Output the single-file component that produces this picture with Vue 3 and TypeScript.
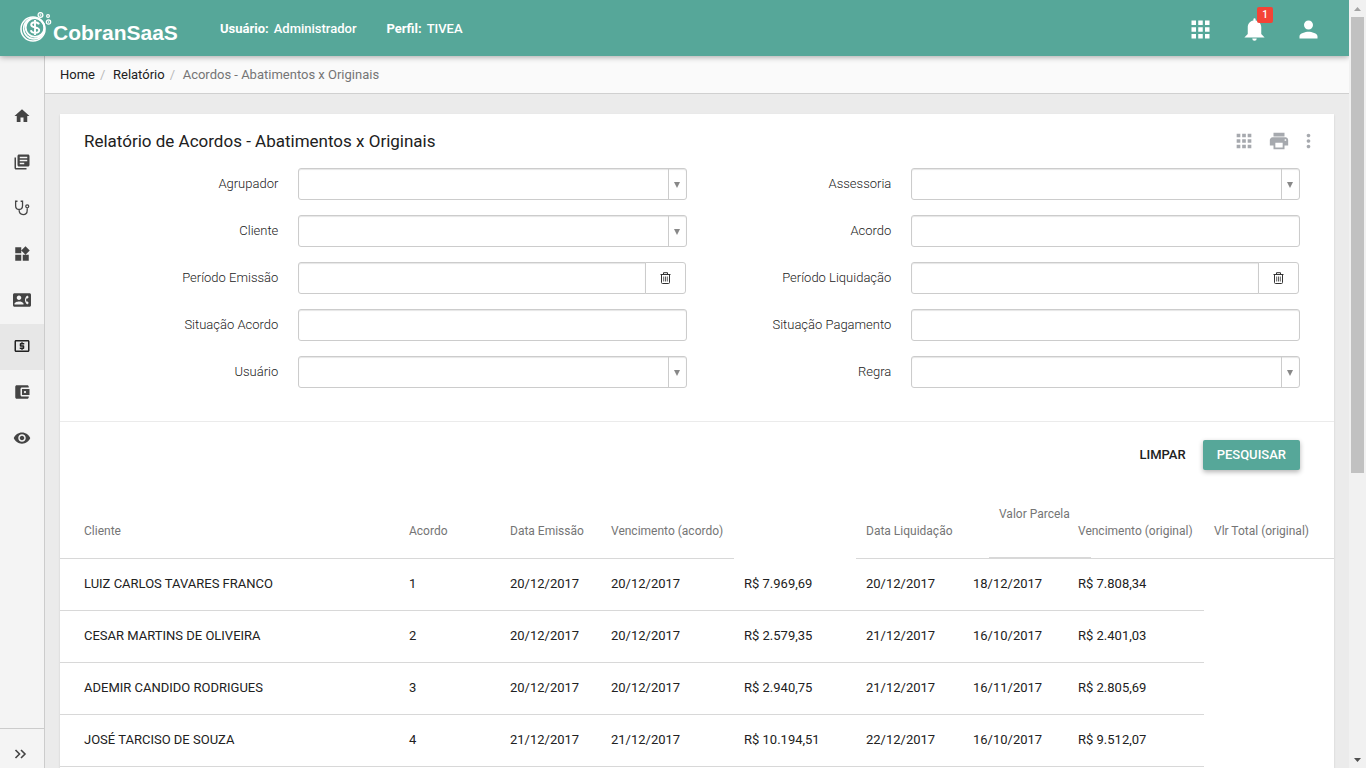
<script setup lang="ts">
interface NavItem {
  label: string
  path: string
  outline?: boolean
  active?: boolean
}

interface Field {
  id: string
  label: string
  kind: 'select' | 'text' | 'period'
}

interface Row {
  cliente: string
  acordo: number
  emissao: string
  vencimento: string
  valor: string
  liquidacao: string
  vencOriginal: string
  total: string
}

const icons = {
  apps: 'M4 8h4V4H4v4zm6 12h4v-4h-4v4zm-6 0h4v-4H4v4zm0-6h4v-4H4v4zm6 0h4v-4h-4v4zm6-10v4h4V4h-4zm-6 4h4V4h-4v4zm6 6h4v-4h-4v4zm0 6h4v-4h-4v4z',
  bell: 'M14 20a2 2 0 0 1-4 0h4zM12 2a1 1 0 0 1 1 1v1.08c2.84.48 5 2.95 5 5.92v6l3 3H3l3-3v-6c0-2.97 2.16-5.44 5-5.92V3a1 1 0 0 1 1-1z',
  person: 'M12 12c2.21 0 4-1.79 4-4s-1.79-4-4-4-4 1.79-4 4 1.79 4 4 4zm0 2c-2.67 0-8 1.34-8 4v2h16v-2c0-2.66-5.33-4-8-4z',
  print: 'M19 8H5c-1.66 0-3 1.34-3 3v6h4v4h12v-4h4v-6c0-1.66-1.34-3-3-3zm-3 11H8v-5h8v5zm3-7c-.55 0-1-.45-1-1s.45-1 1-1 1 .45 1 1-.45 1-1 1zm-1-9H6v4h12V3z',
  more: 'M12 8c1.1 0 2-.9 2-2s-.9-2-2-2-2 .9-2 2 .9 2 2 2zm0 2c-1.1 0-2 .9-2 2s.9 2 2 2 2-.9 2-2-.9-2-2-2zm0 6c-1.1 0-2 .9-2 2s.9 2 2 2 2-.9 2-2-.9-2-2-2z',
}

const nav: NavItem[] = [
  { label: 'Início', path: 'M10 20v-6h4v6h5v-8h3L12 3 2 12h3v8z' },
  { label: 'Cadastros', path: 'M4 6H2v14c0 1.1.9 2 2 2h14v-2H4V6zm16-4H8c-1.1 0-2 .9-2 2v12c0 1.1.9 2 2 2h12c1.1 0 2-.9 2-2V4c0-1.1-.9-2-2-2zm-1 9H9V9h10v2zm-4 4H9v-2h6v2zm4-8H9V5h10v2z' },
  { label: 'Diagnóstico', outline: true, path: 'M6 3H3.500v6c0 3 1.900 5 4.600 5s4.600-2 4.600-5V3H10.200M8.100 14c0 4.200 2 6.700 5.400 6.700 3.500 0 5.400-2.500 5.400-5.500v-3.500M21 9.700a2 2 0 1 1-4 0 2 2 0 0 1 4 0' },
  { label: 'Painéis', path: 'M13 13v8h8v-8h-8zM3 21h8v-8H3v8zM3 3v8h8V3H3zm13.66-1.31L11 7.34 16.66 13l5.66-5.66-5.66-5.65z' },
  { label: 'Contatos', path: 'M22 3H2C.9 3 0 3.9 0 5v14c0 1.1.9 2 2 2h20c1.1 0 1.99-.9 1.99-2L24 5c0-1.1-.9-2-2-2zM8 6c1.66 0 3 1.34 3 3s-1.34 3-3 3-3-1.34-3-3 1.34-3 3-3zm6 12H2v-1c0-2 4-3.1 6-3.1s6 1.1 6 3.1v1zm3.85-4h1.64L21 16l-1.99 1.99c-1.31-.98-2.28-2.38-2.73-3.99-.18-.64-.28-1.31-.28-2s.1-1.36.28-2c.45-1.62 1.42-3.01 2.73-3.99L21 8l-1.51 2h-1.64c-.22.63-.35 1.3-.35 2s.13 1.37.35 2z' },
  { label: 'Relatórios', active: true, path: 'M11 17h2v-1h1c.55 0 1-.45 1-1v-3c0-.55-.45-1-1-1h-3v-1h4V8h-2V7h-2v1h-1c-.55 0-1 .45-1 1v3c0 .55.45 1 1 1h3v1H9v2h2v1zm9-13H4c-1.11 0-1.99.89-1.99 2L2 18c0 1.11.89 2 2 2h16c1.11 0 2-.89 2-2V6c0-1.11-.89-2-2-2zm0 14H4V6h16v12z' },
  { label: 'Carteira', path: 'M21 18v1c0 1.1-.9 2-2 2H5c-1.11 0-2-.9-2-2V5c0-1.1.89-2 2-2h14c1.1 0 2 .9 2 2v1h-9c-1.11 0-2 .9-2 2v8c0 1.1.89 2 2 2h9zm-9-2h10V8H12v8zm4-2.5c-.83 0-1.5-.67-1.5-1.5s.67-1.5 1.5-1.5 1.5.67 1.5 1.5-.67 1.5-1.5 1.5z' },
  { label: 'Monitoramento', path: 'M12 4.5C7 4.5 2.73 7.61 1 12c1.73 4.39 6 7.5 11 7.5s9.27-3.11 11-7.5c-1.73-4.39-6-7.5-11-7.5zM12 17c-2.76 0-5-2.24-5-5s2.24-5 5-5 5 2.24 5 5-2.24 5-5 5zm0-8c-1.66 0-3 1.34-3 3s1.34 3 3 3 3-1.34 3-3-1.34-3-3-3z' },
]

const fields: Field[] = [
  { id: 'agrupador', label: 'Agrupador', kind: 'select' },
  { id: 'assessoria', label: 'Assessoria', kind: 'select' },
  { id: 'cliente', label: 'Cliente', kind: 'select' },
  { id: 'acordo', label: 'Acordo', kind: 'text' },
  { id: 'emissao', label: 'Período Emissão', kind: 'period' },
  { id: 'liquidacao', label: 'Período Liquidação', kind: 'period' },
  { id: 'situacao-acordo', label: 'Situação Acordo', kind: 'text' },
  { id: 'situacao-pagamento', label: 'Situação Pagamento', kind: 'text' },
  { id: 'usuario', label: 'Usuário', kind: 'select' },
  { id: 'regra', label: 'Regra', kind: 'select' },
]

const rows: Row[] = [
  { cliente: 'LUIZ CARLOS TAVARES FRANCO', acordo: 1, emissao: '20/12/2017', vencimento: '20/12/2017', valor: 'R$ 7.969,69', liquidacao: '20/12/2017', vencOriginal: '18/12/2017', total: 'R$ 7.808,34' },
  { cliente: 'CESAR MARTINS DE OLIVEIRA', acordo: 2, emissao: '20/12/2017', vencimento: '20/12/2017', valor: 'R$ 2.579,35', liquidacao: '21/12/2017', vencOriginal: '16/10/2017', total: 'R$ 2.401,03' },
  { cliente: 'ADEMIR CANDIDO RODRIGUES', acordo: 3, emissao: '20/12/2017', vencimento: '20/12/2017', valor: 'R$ 2.940,75', liquidacao: '21/12/2017', vencOriginal: '16/11/2017', total: 'R$ 2.805,69' },
  { cliente: 'JOSÉ TARCISO DE SOUZA', acordo: 4, emissao: '21/12/2017', vencimento: '21/12/2017', valor: 'R$ 10.194,51', liquidacao: '22/12/2017', vencOriginal: '16/10/2017', total: 'R$ 9.512,07' },
]
</script>

<template>
  <div class="screen">
    <div class="app">
      <header class="topbar">
        <a class="brand" href="#" aria-label="CobranSaaS">
          <svg class="coins" viewBox="0 0 32 32" fill="none" stroke="#fff" aria-hidden="true">
            <circle cx="13" cy="17" r="12" stroke-width="1.6" />
            <circle cx="14" cy="16.500" r="10.400" stroke-width="1.500" />
            <circle cx="15" cy="15.500" r="9.400" stroke-width="1.900" />
            <path d="M19 12.300c-.6-1.500-2-2.100-4-2.100-2.200 0-3.800.9-3.800 2.600 0 3.600 8 1.600 8 5.300 0 1.800-1.700 2.800-4 2.800-2.300 0-3.900-.8-4.400-2.600M15 8v15" stroke-width="1.900" />
            <circle cx="20.500" cy="3" r="2.400" stroke-width="1.300" />
            <circle cx="20.500" cy="3" r=".7" stroke-width=".8" />
            <circle cx="28" cy="4" r="1.400" stroke-width="1.200" />
            <circle cx="28.500" cy="10" r="2.200" stroke-width="1.200" />
            <circle cx="28.500" cy="10" r=".6" stroke-width=".8" />
          </svg>
          <span class="brand-name">CobranSaaS</span>
        </a>
        <div class="session">
          <span><b>Usuário:</b>Administrador</span>
          <span><b>Perfil:</b>TIVEA</span>
        </div>
        <div class="top-actions">
          <button type="button" aria-label="Aplicativos">
            <svg viewBox="0 0 24 24"><path :d="icons.apps" /></svg>
          </button>
          <button type="button" aria-label="Notificações">
            <svg viewBox="0 0 24 24"><path :d="icons.bell" /></svg>
            <span class="badge">1</span>
          </button>
          <button type="button" aria-label="Conta">
            <svg viewBox="0 0 24 24"><path :d="icons.person" /></svg>
          </button>
        </div>
      </header>

      <div class="body">
        <nav class="sidebar" aria-label="Menu">
          <a v-for="item in nav" :key="item.label" href="#" :aria-label="item.label" :class="{ active: item.active }">
            <svg viewBox="0 0 24 24" :class="{ outline: item.outline }"><path :d="item.path" /></svg>
          </a>
          <button class="expand" type="button" aria-label="Expandir menu">
            <svg viewBox="0 0 12 10" fill="none" stroke="#444" stroke-width="1.600"><path d="M1 1l4 4-4 4M6.500 1l4 4-4 4" /></svg>
          </button>
        </nav>

        <div class="content">
          <nav class="breadcrumb" aria-label="Trilha">
            <a href="#">Home</a><i>/</i><a href="#">Relatório</a><i>/</i><span>Acordos - Abatimentos x Originais</span>
          </nav>

          <main>
            <section class="card">
              <div class="card-head">
                <h1>Relatório de Acordos - Abatimentos x Originais</h1>
                <div class="card-actions">
                  <button type="button" aria-label="Colunas"><svg viewBox="0 0 24 24"><path :d="icons.apps" /></svg></button>
                  <button type="button" aria-label="Imprimir"><svg viewBox="0 0 24 24"><path :d="icons.print" /></svg></button>
                  <button class="more" type="button" aria-label="Mais opções"><svg viewBox="6 0 12 24"><path :d="icons.more" /></svg></button>
                </div>
              </div>

              <form @submit.prevent>
                <div class="fields">
                  <div v-for="f in fields" :key="f.id" class="field">
                    <label :for="f.id">{{ f.label }}</label>
                    <div v-if="f.kind === 'select'" class="control select">
                      <select :id="f.id"><option value=""></option></select>
                      <span class="arrow"><svg viewBox="0 0 6 6" aria-hidden="true"><path d="M0 0h6L3 6z" /></svg></span>
                    </div>
                    <div v-else-if="f.kind === 'period'" class="control period">
                      <input :id="f.id" type="text" />
                      <button type="button" aria-label="Limpar período">
                        <svg viewBox="0 0 11 12" fill="none" stroke="#333" aria-hidden="true">
                          <path d="M.5 2.500h10M3.500 2.500V.7h4v1.800M1.500 2.500v8q0 1 1 1h6q1 0 1-1v-8" />
                          <path d="M3.700 4.500v5M5.500 4.500v5M7.300 4.500v5" stroke-width=".8" />
                        </svg>
                      </button>
                    </div>
                    <div v-else class="control">
                      <input :id="f.id" type="text" />
                    </div>
                  </div>
                </div>
                <div class="form-actions">
                  <button class="clear" type="reset">LIMPAR</button>
                  <button class="search" type="submit">PESQUISAR</button>
                </div>
              </form>

              <table>
                <colgroup>
                  <col /><col class="w-short" /><col class="w-short" /><col class="w-due" /><col class="w-value" />
                  <col class="w-paid" /><col class="w-orig" /><col class="w-head" /><col class="w-total" />
                </colgroup>
                <thead>
                  <tr>
                    <th scope="col">Cliente</th>
                    <th scope="col">Acordo</th>
                    <th scope="col">Data Emissão</th>
                    <th scope="col">Vencimento (acordo)</th>
                    <td class="open"></td>
                    <th scope="col">Data Liquidação</th>
                    <th scope="col" class="host"><span class="floating">Valor Parcela</span></th>
                    <th scope="col">Vencimento (original)</th>
                    <th scope="col">Vlr Total (original)</th>
                  </tr>
                </thead>
                <tbody>
                  <tr v-for="r in rows" :key="r.acordo">
                    <td>{{ r.cliente }}</td>
                    <td>{{ r.acordo }}</td>
                    <td>{{ r.emissao }}</td>
                    <td>{{ r.vencimento }}</td>
                    <td>{{ r.valor }}</td>
                    <td>{{ r.liquidacao }}</td>
                    <td>{{ r.vencOriginal }}</td>
                    <td>{{ r.total }}</td>
                  </tr>
                </tbody>
              </table>
            </section>
          </main>
        </div>
      </div>
    </div>

    <div class="scrollbar" aria-hidden="true">
      <svg viewBox="0 0 17 17"><path d="M5 11h7L8.500 7z" fill="#a3a3a3" /></svg>
      <div class="rail"><div class="thumb"></div></div>
      <svg viewBox="0 0 17 17"><path d="M5 7h7l-3.500 4z" fill="#505050" /></svg>
    </div>
  </div>
</template>

<style>
body {
  margin: 0;
}
</style>

<style scoped>
* {
  box-sizing: border-box;
}
.screen {
  display: grid;
  grid-template-columns: minmax(0, 1fr) 17px;
  height: 100vh;
  overflow: hidden;
  font-family: Roboto, 'Liberation Sans', sans-serif;
  font-size: 13px;
  line-height: 18px;
  color: #212121;
}
.app {
  display: flex;
  flex-direction: column;
  min-height: 0;
  overflow: hidden;
}
a {
  color: inherit;
  text-decoration: none;
}
button {
  font: inherit;
  color: inherit;
  background: none;
  border: 0;
  padding: 0;
  cursor: pointer;
}
svg {
  display: block;
}

/* top bar */
.topbar {
  position: relative;
  z-index: 2;
  flex: none;
  display: flex;
  align-items: center;
  height: 56px;
  padding: 0 27px 0 20px;
  background: #56a799;
  color: #fff;
  box-shadow: 0 1px 6px rgba(0, 0, 0, 0.35);
}
.brand {
  display: flex;
  align-items: center;
  gap: 1px;
  width: 200px;
}
.coins {
  width: 32px;
  height: 32px;
}
.brand-name {
  font: bold 21px/24px 'Liberation Sans', Arial, sans-serif;
  padding-top: 10px;
}
.session {
  display: flex;
  gap: 30px;
  padding-top: 2px;
  font-weight: 500;
}
.session b {
  font-weight: 700;
  margin-right: 5px;
}
.top-actions {
  display: flex;
  gap: 27px;
  margin-left: auto;
  padding-top: 2px;
}
.top-actions button {
  position: relative;
}
.top-actions svg {
  width: 27px;
  height: 27px;
  fill: #fff;
}
.badge {
  position: absolute;
  top: -9px;
  left: 16px;
  width: 16px;
  height: 16px;
  border-radius: 2px;
  background: #f44336;
  font-size: 10px;
  line-height: 16px;
  font-weight: 500;
}

/* side menu */
.body {
  flex: 1;
  display: flex;
  min-height: 0;
}
.sidebar {
  flex: none;
  display: flex;
  flex-direction: column;
  width: 45px;
  padding-top: 38px;
  border-right: 1px solid #ccc;
  background: #f4f4f4;
}
.sidebar a {
  display: grid;
  place-items: center;
  height: 46px;
  padding-bottom: 2px;
  fill: #444;
}
.sidebar a.active {
  background: #e7e7e7;
  fill: #222;
}
.sidebar a svg {
  width: 18px;
  height: 18px;
}
.sidebar a svg.outline {
  fill: none;
  stroke: #444;
  stroke-width: 1.7;
}
.expand {
  display: flex;
  align-items: center;
  height: 40px;
  margin-top: auto;
  padding: 10px 0 0 14px;
  border-top: 1px solid #ccc;
}
.expand svg {
  width: 13px;
  height: 10px;
}

/* page */
.content {
  flex: 1;
  min-width: 0;
  display: flex;
  flex-direction: column;
  background: #ebebeb;
}
.breadcrumb {
  flex: none;
  display: flex;
  align-items: center;
  height: 38px;
  padding: 0 15px;
  background: #fafafa;
  border-bottom: 1px solid #d0d0d0;
}
.breadcrumb i {
  font-style: normal;
  color: #bbb;
  width: 18px;
  padding-left: 5px;
}
.breadcrumb span {
  color: #757575;
}
main {
  flex: 1;
  min-height: 0;
  overflow: hidden;
  padding: 20px 15px 0;
}
.card {
  min-height: 100%;
  background: #fff;
  box-shadow: 0 1px 2px rgba(0, 0, 0, 0.12);
}
.card-head {
  display: flex;
  align-items: center;
  justify-content: space-between;
  height: 54px;
  padding: 0 20px 0 24px;
}
h1 {
  margin: 0;
  font-size: 17px;
  line-height: 24px;
  font-weight: 400;
}
.card-actions {
  display: flex;
  gap: 13px;
}
.card-actions svg {
  width: 22px;
  height: 22px;
  fill: #a6a9ae;
}
.card-actions .more svg {
  width: 11px;
}

/* filters */
.fields {
  display: grid;
  grid-template-columns: 1fr 1fr;
  row-gap: 15px;
  padding: 0 24px 33px;
}
.field {
  display: grid;
  grid-template-columns: 1fr 2fr;
  align-items: center;
}
.field label {
  padding-right: 10px;
  text-align: right;
  font-weight: 300;
  color: #222;
}
.control {
  position: relative;
  height: 32px;
  margin: 0 10px;
}
.control input,
.control select {
  display: block;
  width: 100%;
  height: 32px;
  padding: 0 8px;
  border: 1px solid #ccc;
  border-radius: 3px;
  background: #fff;
  box-shadow: inset 0 1px 1px rgba(0, 0, 0, 0.1);
  font: inherit;
  appearance: none;
}
.control select {
  padding-right: 26px;
}
.arrow {
  position: absolute;
  top: 1px;
  right: 1px;
  bottom: 1px;
  width: 18px;
  display: grid;
  place-items: center;
  padding: 2px 2px 0 0;
  border-left: 1px solid #ccc;
  pointer-events: none;
}
.arrow svg {
  width: 6px;
  height: 6px;
  fill: #888;
}
.period {
  display: flex;
  margin-right: 11px;
}
.period input {
  flex: 1;
  min-width: 0;
  border-radius: 3px 0 0 3px;
}
.period button {
  display: grid;
  place-items: center;
  width: 41px;
  margin-left: -1px;
  border: 1px solid #ccc;
  border-radius: 0 3px 3px 0;
  background: #fff;
}
.period svg {
  width: 11px;
  height: 12px;
}
.form-actions {
  display: flex;
  justify-content: flex-end;
  gap: 3px;
  padding: 18px 34px 33px;
  border-top: 1px solid #ebebeb;
}
.form-actions button {
  height: 30px;
  padding: 0 14px;
  border-radius: 2px;
  font-weight: 500;
}
.form-actions .search {
  background: #56a799;
  color: #fff;
  box-shadow: 0 2px 5px rgba(0, 0, 0, 0.3);
}

/* results */
table {
  width: 100%;
  table-layout: fixed;
  border-collapse: separate;
  border-spacing: 0;
}
.w-short {
  width: 101px;
}
.w-due {
  width: 133px;
}
.w-value {
  width: 122px;
}
.w-paid {
  width: 107px;
}
.w-orig {
  width: 105px;
}
.w-head {
  width: 136px;
}
.w-total {
  width: 130px;
}
th,
td {
  height: 52px;
  padding: 0 0 2px 10px;
  border-bottom: 1px solid #d8d8d8;
  text-align: left;
  white-space: nowrap;
  font-weight: 400;
}
th {
  height: 56px;
  padding-bottom: 0;
  font-size: 12px;
  color: #757575;
}
th:first-child,
td:first-child {
  padding-left: 24px;
}
td.open {
  border-bottom: 0;
}
th.host {
  position: relative;
}
.floating {
  position: absolute;
  left: 26px;
  bottom: 0;
  width: 102px;
  height: 53px;
  padding-left: 10px;
  border-bottom: 1px solid #d8d8d8;
}

/* scroll rail */
.scrollbar {
  display: flex;
  flex-direction: column;
  background: #f1f1f1;
}
.scrollbar svg {
  flex: none;
  width: 17px;
  height: 17px;
}
.rail {
  flex: 1;
  padding: 0 2px;
}
.thumb {
  height: 62.1%;
  background: #c1c1c1;
}
</style>
